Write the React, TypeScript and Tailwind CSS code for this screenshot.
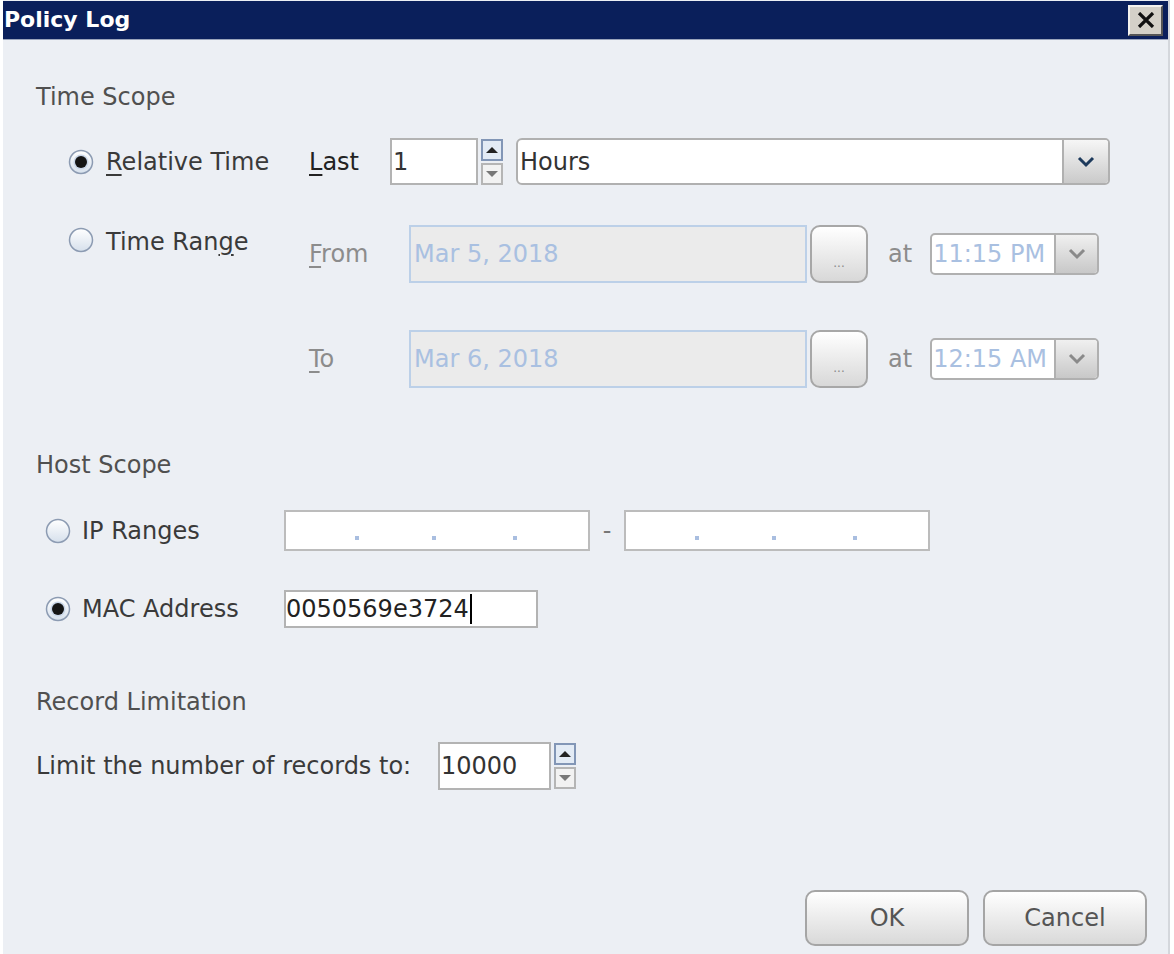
import React from "react";

const font = { fontFamily: '"DejaVu Sans", sans-serif' };

function Radio({ checked }: { checked?: boolean }) {
  return (
    <svg width="26" height="26" viewBox="0 0 26 26" className="shrink-0">
      <defs>
        <linearGradient id={checked ? "rg1" : "rg0"} x1="0" y1="0" x2="0" y2="1">
          <stop offset="0" stopColor="#ffffff" />
          <stop offset="1" stopColor="#d6e0ec" />
        </linearGradient>
      </defs>
      <circle cx="13" cy="13" r="11.5" fill={`url(#${checked ? "rg1" : "rg0"})`} stroke="#8c9bb2" strokeWidth="1.5" />
      {checked && <circle cx="13" cy="13" r="7.5" fill="#c9d6e8" />}
      {checked && <circle cx="13" cy="13" r="6" fill="#151515" />}
    </svg>
  );
}

function Chevron({ color }: { color: string }) {
  return (
    <svg width="20" height="12" viewBox="0 0 20 12">
      <path d="M3 2 L10 9 L17 2" fill="none" stroke={color} strokeWidth="3" />
    </svg>
  );
}

function Spinner() {
  return (
    <div className="flex flex-col gap-[2px] ml-[3px]">
      <div className="w-[22px] h-[22px] border-2 border-[#8296b6] bg-[#e3ebf5] flex items-center justify-center">
        <svg width="12" height="8" viewBox="0 0 12 8"><path d="M0 7 L6 1 L12 7 Z" fill="#222" /></svg>
      </div>
      <div className="w-[22px] h-[22px] border-2 border-[#b5b5b5] bg-[#f2f2f2] flex items-center justify-center">
        <svg width="12" height="8" viewBox="0 0 12 8"><path d="M0 1 L12 1 L6 7 Z" fill="#777" /></svg>
      </div>
    </div>
  );
}

function DotsButton() {
  return (
    <div className="w-[58px] h-[58px] ml-[3px] rounded-[10px] border-2 border-[#a7a7a7] bg-gradient-to-b from-[#ffffff] to-[#d8d8d8] flex items-end justify-center pb-[12px]">
      <span className="text-[12px] leading-none text-[#8a8a8a]">...</span>
    </div>
  );
}

function TimeCombo({ value }: { value: string }) {
  return (
    <div className="ml-[18px] w-[169px] h-[42px] flex rounded-[5px] border-2 border-[#b0b0b0] overflow-hidden bg-white">
      <div className="flex-1 flex items-center pl-[1px] text-[#a9c0e1] text-[24px]">{value}</div>
      <div className="w-[43px] border-l-2 border-[#b0b0b0] bg-gradient-to-b from-[#f0f0f0] to-[#c8c8c8] flex items-center justify-center">
        <Chevron color="#8a8a8a" />
      </div>
    </div>
  );
}

function DateRow({ u, rest, date, time }: { u: string; rest: string; date: string; time: string }) {
  return (
    <div className="flex items-center h-[58px]">
      <div className="w-[100px] text-[#8c8c8c]">
        <u className="underline-offset-[4px]">{u}</u>
        {rest}
      </div>
      <div className="w-[398px] h-[58px] border-2 border-[#bcd0e8] bg-[#ebebeb] flex items-center pl-[3px] text-[#a9c0e1]">
        {date}
      </div>
      <DotsButton />
      <span className="ml-[20px] text-[#8c8c8c]">at</span>
      <TimeCombo value={time} />
    </div>
  );
}

function IpField() {
  return (
    <div className="w-[306px] h-[41px] border-2 border-[#bcbcbc] bg-white relative">
      <span className="absolute top-[24px] left-[69px] w-[4px] h-[4px] bg-[#a9bee0]" />
      <span className="absolute top-[24px] left-[146px] w-[4px] h-[4px] bg-[#a9bee0]" />
      <span className="absolute top-[24px] left-[227px] w-[4px] h-[4px] bg-[#a9bee0]" />
    </div>
  );
}

function Btn({ children }: { children: React.ReactNode }) {
  return (
    <div className="w-[164px] h-[56px] rounded-[10px] border-2 border-[#a5a5a5] bg-gradient-to-b from-[#ffffff] to-[#d9d9d9] flex items-center justify-center text-[#555]">
      {children}
    </div>
  );
}

export default function App() {
  return (
    <div className="w-[1174px] h-[954px] bg-white overflow-hidden text-[24px] leading-[30px]" style={font}>
      <div className="ml-[3px] w-[1167px] h-[954px] bg-[#eceff4] border-r-2 border-[#d4d7dc] flex flex-col">
        {/* title bar */}
        <div className="h-[39px] mt-[1px] bg-[#0a1f5b] flex items-center justify-between pl-[1px] pr-[5px] border-b border-[#9aa4bb]">
          <span className="text-white font-bold text-[22px]">Policy Log</span>
          <div className="w-[35px] h-[31px] bg-[#d4d0c8] border-t-2 border-l-2 border-[#f4f2ee] border-r-2 border-b-2 border-r-[#555] border-b-[#555] flex items-center justify-center">
            <svg width="18" height="16" viewBox="0 0 18 16"><path d="M2 1 L16 15 M16 1 L2 15" stroke="#111" strokeWidth="3.2" /></svg>
          </div>
        </div>

        {/* body */}
        <div className="flex flex-col pl-[33px] text-[#3a3a3a]">
          <div className="mt-[42px] h-[30px] text-[#505050]">Time Scope</div>

          <div className="mt-[26px] h-[47px] flex items-center">
            <div className="w-[273px] pl-[32px] flex items-center gap-[12px]">
              <Radio checked />
              <span>
                <u className="underline-offset-[4px]">R</u>elative Time
              </span>
            </div>
            <span className="w-[81px] text-[#222]">
              <u className="underline-offset-[4px]">L</u>ast
            </span>
            <div className="w-[88px] h-[47px] border-2 border-[#b3b3b3] bg-white flex items-center pl-[1px] text-[#333]">1</div>
            <Spinner />
            <div className="ml-[13px] w-[594px] h-[47px] flex rounded-l-[6px] rounded-r-[5px] border-2 border-[#b0b0b0] overflow-hidden bg-white">
              <div className="flex-1 flex items-center pl-[2px] text-[#333]">Hours</div>
              <div className="w-[46px] border-l-2 border-[#b0b0b0] bg-gradient-to-b from-[#f6f6f6] to-[#cacaca] flex items-center justify-center">
                <Chevron color="#1d3a5c" />
              </div>
            </div>
          </div>

          <div className="mt-[40px] flex">
            <div className="w-[273px] pl-[32px] pt-[2px] flex items-start gap-[12px] h-[30px]">
              <Radio />
              <span>
                Time Ran<u className="underline-offset-[4px]">g</u>e
              </span>
            </div>
            <div className="flex flex-col gap-[47px]">
              <DateRow u="F" rest="rom" date="Mar 5, 2018" time="11:15 PM" />
              <DateRow u="T" rest="o" date="Mar 6, 2018" time="12:15 AM" />
            </div>
          </div>

          <div className="mt-[62px] h-[30px] text-[#505050]">Host Scope</div>

          <div className="mt-[30px] h-[41px] flex items-center">
            <div className="w-[248px] pl-[9px] flex items-center gap-[11px]">
              <Radio />
              <span>IP Ranges</span>
            </div>
            <IpField />
            <span className="w-[34px] text-center text-[#777]">-</span>
            <IpField />
          </div>

          <div className="mt-[39px] h-[38px] flex items-center">
            <div className="w-[248px] pl-[9px] flex items-center gap-[11px]">
              <Radio checked />
              <span>MAC Address</span>
            </div>
            <div className="w-[254px] h-[38px] border-2 border-[#b3b3b3] bg-white flex items-center text-[#222]">
              <span>0050569e3724</span>
              <span className="w-[2px] h-[30px] bg-black ml-[1px]" />
            </div>
          </div>

          <div className="mt-[59px] h-[30px] text-[#505050]">Record Limitation</div>

          <div className="mt-[25px] h-[48px] flex items-center">
            <span className="w-[402px]">Limit the number of records to:</span>
            <div className="w-[113px] h-[48px] border-2 border-[#b3b3b3] bg-white flex items-center pl-[1px] text-[#333]">10000</div>
            <Spinner />
          </div>

          <div className="mt-[100px] flex justify-end gap-[14px] pr-[21px]">
            <Btn>OK</Btn>
            <Btn>Cancel</Btn>
          </div>
        </div>
      </div>
    </div>
  );
}
